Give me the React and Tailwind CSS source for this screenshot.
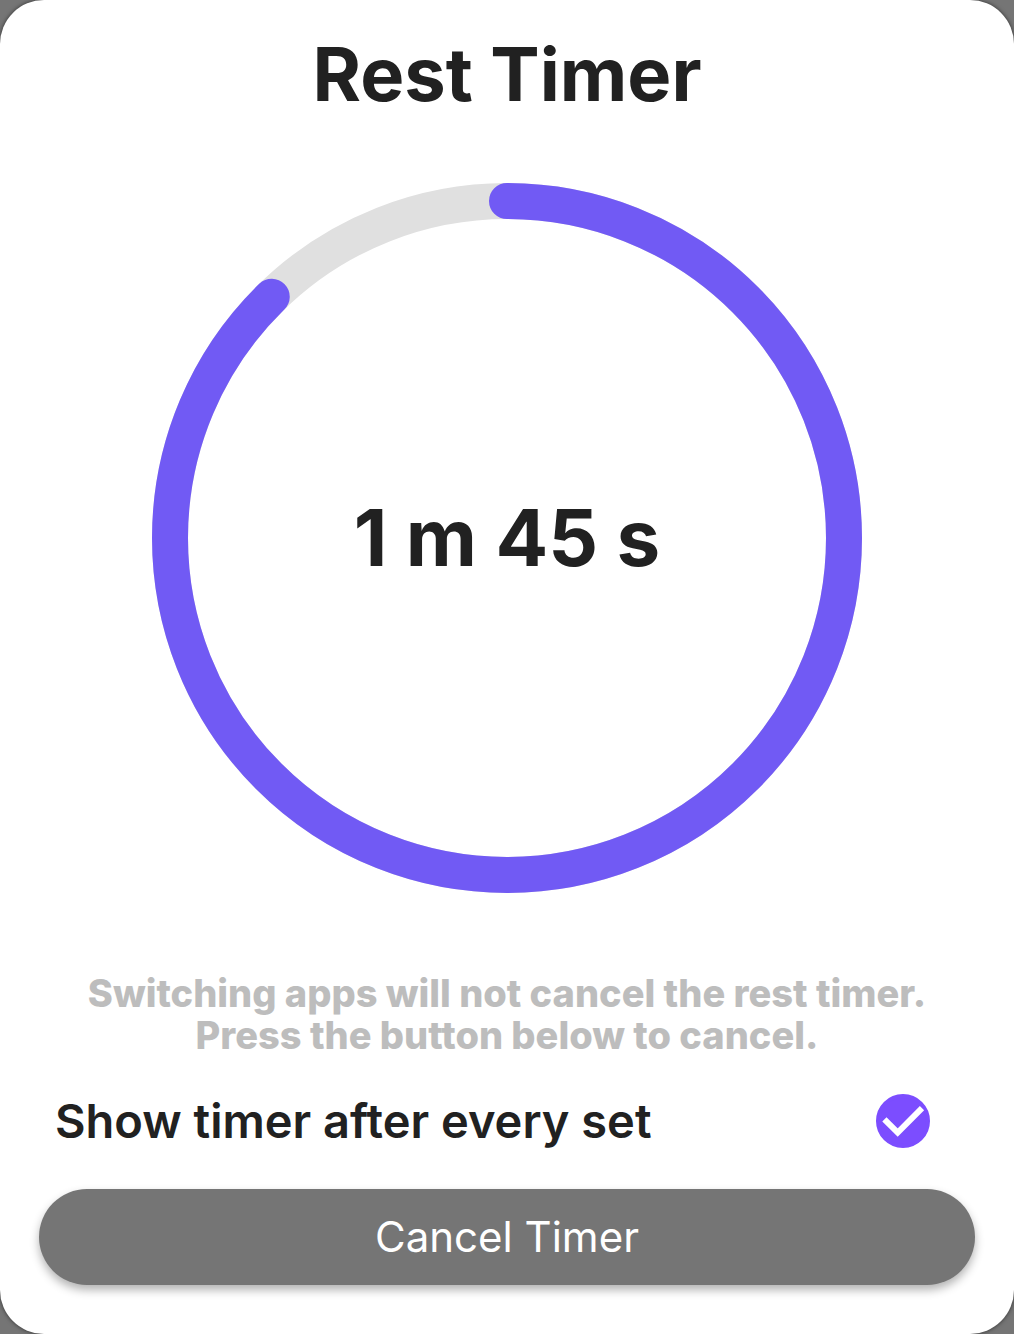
import { useState } from "react";

const RADIUS = 337;
const CIRCUMFERENCE = 2 * Math.PI * RADIUS;

const formatTime = (seconds) =>
  `${Math.floor(seconds / 60)} m ${Math.floor(seconds % 60)} s`;

/**
 * @component TimerRing
 * Circular progress with the remaining time in the middle.
 */
const TimerRing = ({ remaining, total }) => {
  const progress = remaining / total;

  return (
    <div className="mx-auto grid w-full max-w-[712px] place-items-center">
      <svg
        viewBox="0 0 712 712"
        className="col-start-1 row-start-1 w-full"
        fill="none"
        strokeWidth="36"
        aria-hidden="true"
      >
        <circle cx="356" cy="356" r={RADIUS} stroke="#e0e0e0" />
        <circle
          cx="356"
          cy="356"
          r={RADIUS}
          stroke="#715af4"
          strokeLinecap="round"
          strokeDasharray={`${progress * CIRCUMFERENCE} ${CIRCUMFERENCE}`}
          transform="rotate(-90 356 356)"
        />
      </svg>
      <p className="col-start-1 row-start-1 text-[78px] leading-[88px] font-bold">
        {formatTime(remaining)}
      </p>
    </div>
  );
};

const App = () => {
  const [showTimer, setShowTimer] = useState(true);

  return (
    <div className="min-h-screen bg-[#757575] font-['Inter',sans-serif] text-[#212121]">
      <main className="flex min-h-screen flex-col rounded-[44px] bg-white px-[39px] pt-[30px] pb-12 shadow-[0_0_4px_rgba(0,0,0,0.6)]">
        <h1 className="text-center text-[74px] leading-[88px] font-bold">
          Rest Timer
        </h1>

        <div className="mt-16">
          <TimerRing remaining={105.2} total={120} />
        </div>

        <p className="mt-[78px] text-center text-[38px] leading-[42px] font-extrabold text-[#bdbdbd]">
          Switching apps will not cancel the rest timer.
          <br />
          Press the button below to cancel.
        </p>

        <label className="mt-8 flex items-center justify-between pr-[45px] pl-4 text-[47px] leading-[66px] font-semibold">
          Show timer after every set
          <span className="grid size-[54px] place-items-center">
            <input
              type="checkbox"
              checked={showTimer}
              onChange={(e) => setShowTimer(e.target.checked)}
              className="col-start-1 row-start-1 size-full appearance-none rounded-full border-4 border-[#7c4dff] checked:bg-[#7c4dff]"
            />
            {showTimer && (
              <svg
                viewBox="0 0 54 54"
                className="pointer-events-none col-start-1 row-start-1 size-full"
                fill="none"
                stroke="white"
                strokeWidth="6"
                aria-hidden="true"
              >
                <path d="M8.4 25.4 21.7 38.6 46 14.2" />
              </svg>
            )}
          </span>
        </label>

        <button
          type="button"
          className="mt-[35px] h-24 w-full rounded-full bg-[#757575] pb-0.5 text-[42px] text-white shadow-[0_5px_10px_rgba(0,0,0,0.3)]"
        >
          Cancel Timer
        </button>
      </main>
    </div>
  );
};

export default App;
